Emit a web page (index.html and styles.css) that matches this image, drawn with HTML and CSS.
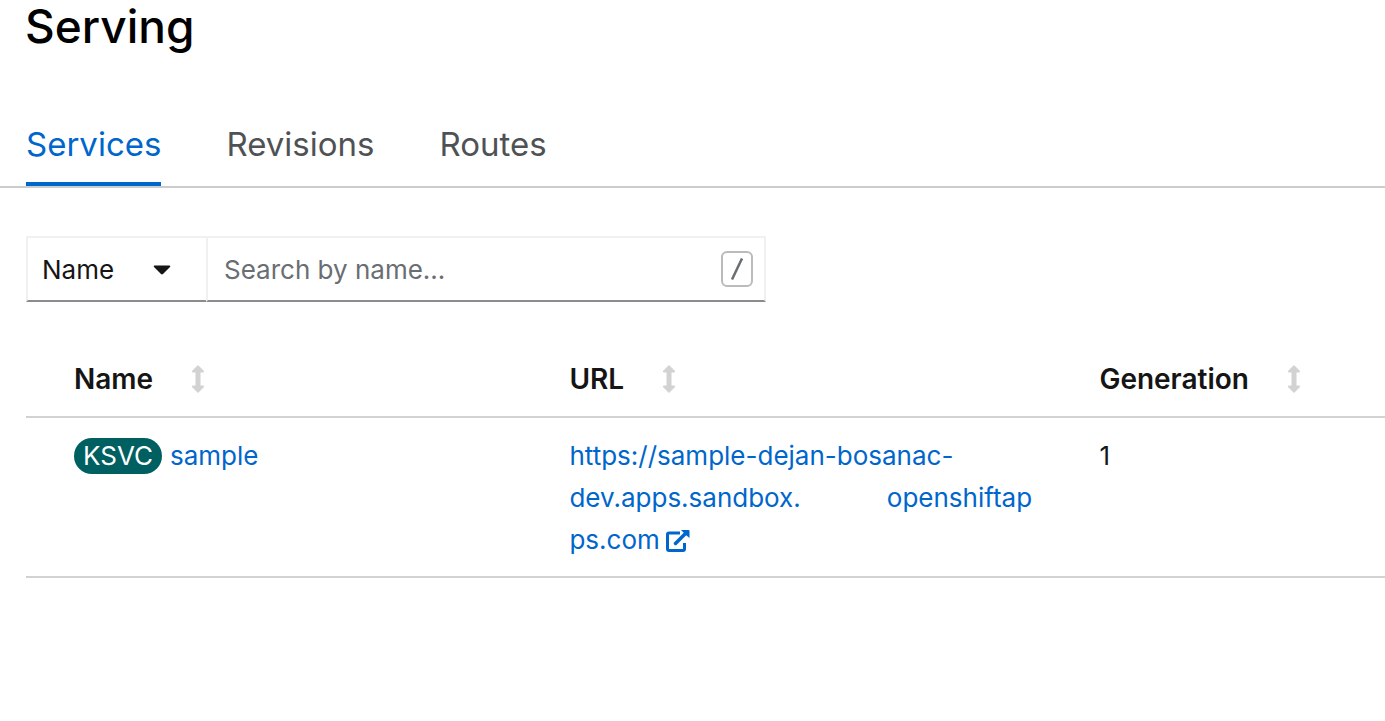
FILE: index.html
```
<!DOCTYPE html>
<html lang="en">
<head>
<meta charset="utf-8">
<title>Serving</title>
<link rel="stylesheet" href="styles.css">
</head>
<body>
<svg class="sprite" aria-hidden="true">
  <symbol id="sort" viewBox="0 0 14 28"><path d="M7 0.500L12.500 6V7H9V21H12.500V22L7 27.500L1.500 22V21H5V7H1.500V6Z" fill="currentColor" stroke="currentColor" stroke-linejoin="round"/></symbol>
</svg>
<main class="page">
  <h1 class="title">Serving</h1>
  <nav class="tabs" aria-label="Serving resources">
    <a class="tab tab-active" href="#services" aria-current="page">Services</a>
    <a class="tab" href="#revisions">Revisions</a>
    <a class="tab" href="#routes">Routes</a>
  </nav>
  <section class="content">
    <div class="filter">
      <button class="filter-type" type="button" aria-haspopup="listbox">Name
        <svg class="caret" viewBox="0 0 18 10" aria-hidden="true"><path d="M1.500 0.500H16.500Q18 0.800 17 2L10 9Q9 9.800 8 9L1 2Q0 0.800 1.500 0.500Z" fill="currentColor"/></svg>
      </button>
      <div class="search">
        <input class="search-input" type="text" placeholder="Search by name..." aria-label="Search by name">
        <kbd class="shortcut"><svg class="slash" viewBox="0 0 12 22" role="img" aria-label="Slash"><path d="M1 21.500L11 0.500" fill="none" stroke="currentColor" stroke-width="2.500"/></svg></kbd>
      </div>
    </div>
    <table class="services">
      <colgroup><col class="col-name"><col class="col-url"><col></colgroup>
      <thead>
        <tr>
          <th scope="col"><button class="sort" type="button">Name <svg class="sort-icon" aria-hidden="true"><use href="#sort"/></svg></button></th>
          <th scope="col"><button class="sort" type="button">URL <svg class="sort-icon" aria-hidden="true"><use href="#sort"/></svg></button></th>
          <th scope="col"><button class="sort" type="button">Generation <svg class="sort-icon" aria-hidden="true"><use href="#sort"/></svg></button></th>
        </tr>
      </thead>
      <tbody>
        <tr>
          <td><div class="resource"><span class="badge">KSVC</span><a class="link" href="#sample">sample</a></div></td>
          <td><a class="link" href="#url">https://sample-dejan-bosanac-<br>dev.apps.sandbox.<span class="gap"></span>openshiftap<br>ps.com<svg class="external" viewBox="0 0 24 24" aria-hidden="true"><path d="M14 4H3Q1.500 4 1.500 5.500V20Q1.500 21.500 3 21.500H17Q18.500 21.500 18.500 20V14" fill="none" stroke="currentColor" stroke-width="3"/><path d="M9.500 14.500L20 4" fill="none" stroke="currentColor" stroke-width="3.500" stroke-linecap="round"/><path d="M15.500 1H22.500Q23.500 1 23.500 2V9L20.500 6.500L18 4L15.500 1.500Z" fill="currentColor"/></svg></a></td>
          <td>1</td>
        </tr>
      </tbody>
    </table>
  </section>
</main>
</body>
</html>
```
FILE: styles.css
```
* { box-sizing: border-box; }
body {
  margin: 0;
  background: #fff;
  color: #151515;
  font-family: Inter, "Liberation Sans", sans-serif;
  font-size: 26px;
  line-height: 42px;
}
button, input { font: inherit; color: inherit; }
.sprite { display: none; }
.title {
  margin: 0;
  padding-left: 25px;
  color: #000;
  font-size: 46px;
  font-weight: 500;
  line-height: 52px;
}
.tabs {
  display: flex;
  gap: 65px;
  margin-top: 64px;
  padding-left: 26px;
  border-bottom: 2px solid #ccc;
  font-size: 33px;
  line-height: 56px;
}
.tab {
  padding-bottom: 10px;
  border-bottom: 4px solid transparent;
  color: #4f5255;
  text-decoration: none;
}
.tab-active { border-color: #06c; color: #06c; }
.content { padding: 48px 0 0 26px; }
.filter { display: flex; width: 740px; max-width: 100%; height: 66px; }
.filter-type {
  display: flex;
  align-items: center;
  justify-content: space-between;
  width: 180px;
  padding: 1px 35px 0 14px;
  background: #fff;
  border: 2px solid #f0f0f0;
  border-right: 0;
  border-bottom-color: #8a8d90;
}
.caret { width: 18px; height: 10px; }
.search {
  display: flex;
  align-items: center;
  flex: 1;
  min-width: 0;
  padding: 0 11px 0 16px;
  border: 2px solid #f0f0f0;
  border-bottom-color: #8a8d90;
}
.search-input { flex: 1; min-width: 0; padding: 2px 0 0; border: 0; outline: 0; background: none; }
.search-input::placeholder { color: #6a6e73; opacity: 1; }
.shortcut {
  display: flex;
  align-items: center;
  justify-content: center;
  width: 32px;
  height: 36px;
  border: 2px solid #bbb;
  border-radius: 6px;
  color: #6a6e73;
}
.slash { width: 12px; height: 22px; }
.services {
  width: 100%;
  margin-top: 40px;
  border-collapse: collapse;
  table-layout: fixed;
}
.col-name { width: 38%; }
.col-url { width: 39%; }
.services th, .services td {
  padding: 16px 0 16px 27px;
  border-bottom: 2px solid #d2d2d2;
  text-align: left;
  vertical-align: top;
}
.services td { padding-top: 17px; padding-bottom: 15px; }
.services th:first-child, .services td:first-child { padding-left: 48px; }
.sort {
  display: flex;
  align-items: center;
  gap: 38px;
  padding: 0;
  border: 0;
  background: none;
  font-size: 28px;
  font-weight: 600;
}
.sort-icon { width: 14px; height: 28px; color: #d2d2d2; }
.resource { display: flex; align-items: center; gap: 8px; }
.badge {
  padding: 0 9px;
  border-radius: 18px;
  background: #005f60;
  color: #fff;
  line-height: 36px;
}
.link { color: #06c; text-decoration: none; }
.gap { display: inline-block; width: 86px; }
.external { width: 24px; height: 24px; margin-left: 6px; vertical-align: -4px; }
```
